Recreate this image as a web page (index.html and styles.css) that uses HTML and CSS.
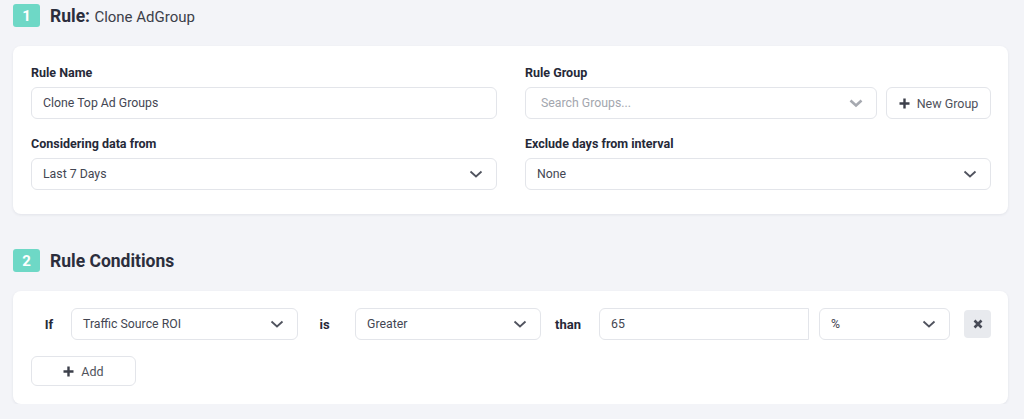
FILE: index.html
```html
<!DOCTYPE html>
<html>
<head>
  <title>Rule Editor</title>
  <link rel="stylesheet" href="styles.css">
</head>
<body>
  <div class="section-title">
    <span class="step">1</span>
    <h2><b>Rule:</b> <span class="rule-name">Clone AdGroup</span></h2>
  </div>
  <div class="card card-rule">
    <div class="grid">
      <div class="field">
        <label>Rule Name</label>
        <div class="input">Clone Top Ad Groups</div>
      </div>
      <div class="field">
        <label>Rule Group</label>
        <div class="group-row">
          <div class="input select search">
            <span class="placeholder">Search Groups...</span>
            <svg class="chev bold" width="14" height="10" viewBox="0 0 14 10"><path d="M1.5 2.5 L7 7.5 L12.5 2.5" fill="none" stroke="currentColor" stroke-width="2.6"/></svg>
          </div>
          <div class="btn new-group">
            <svg width="11" height="11" viewBox="0 0 11 11"><path d="M5.5 0.5 V10.5 M0.5 5.5 H10.5" stroke="currentColor" stroke-width="2.4"/></svg>
            New Group
          </div>
        </div>
      </div>
      <div class="field">
        <label>Considering data from</label>
        <div class="input select">
          <span>Last 7 Days</span>
          <svg class="chev" width="14" height="10" viewBox="0 0 14 10"><path d="M1.5 2.5 L7 7.5 L12.5 2.5" fill="none" stroke="currentColor" stroke-width="1.8"/></svg>
        </div>
      </div>
      <div class="field">
        <label>Exclude days from interval</label>
        <div class="input select">
          <span>None</span>
          <svg class="chev" width="14" height="10" viewBox="0 0 14 10"><path d="M1.5 2.5 L7 7.5 L12.5 2.5" fill="none" stroke="currentColor" stroke-width="1.8"/></svg>
        </div>
      </div>
    </div>
  </div>

  <div class="section-title second">
    <span class="step">2</span>
    <h2><b>Rule Conditions</b></h2>
  </div>
  <div class="card card-cond">
    <div class="cond-row">
      <span class="word w-if">If</span>
      <div class="input select s-metric">
        <span>Traffic Source ROI</span>
        <svg class="chev" width="14" height="10" viewBox="0 0 14 10"><path d="M1.5 2.5 L7 7.5 L12.5 2.5" fill="none" stroke="currentColor" stroke-width="1.8"/></svg>
      </div>
      <span class="word w-is">is</span>
      <div class="input select s-op">
        <span>Greater</span>
        <svg class="chev" width="14" height="10" viewBox="0 0 14 10"><path d="M1.5 2.5 L7 7.5 L12.5 2.5" fill="none" stroke="currentColor" stroke-width="1.8"/></svg>
      </div>
      <span class="word w-than">than</span>
      <div class="input s-value">65</div>
      <div class="input select s-unit">
        <span>%</span>
        <svg class="chev" width="14" height="10" viewBox="0 0 14 10"><path d="M1.5 2.5 L7 7.5 L12.5 2.5" fill="none" stroke="currentColor" stroke-width="1.8"/></svg>
      </div>
      <div class="remove">
        <svg width="10" height="10" viewBox="0 0 10 10"><path d="M1.5 1.5 L8.5 8.5 M8.5 1.5 L1.5 8.5" stroke="currentColor" stroke-width="2.6"/></svg>
      </div>
    </div>
    <div class="btn add">
      <svg width="11" height="11" viewBox="0 0 11 11"><path d="M5.5 0.5 V10.5 M0.5 5.5 H10.5" stroke="currentColor" stroke-width="2.4"/></svg>
      Add
    </div>
  </div>
</body>
</html>
```

FILE: styles.css
```css
body {
  margin: 0;
  padding: 4px 16px 0 13px;
  background-color: #f3f4f8;
  font-family: Roboto, "Liberation Sans", sans-serif;
  color: #2b2e3d;
}

.section-title {
  display: flex;
  align-items: center;
  height: 23px;
}

.section-title.second {
  margin-top: 35px;
}

.step {
  width: 27px;
  height: 23px;
  border-radius: 3px;
  background-color: #6ed8c6;
  color: #ffffff;
  font-size: 15px;
  font-weight: 700;
  display: flex;
  justify-content: center;
  align-items: center;
}

h2 {
  margin: 0 0 0 10px;
  font-size: 17.5px;
  font-weight: 400;
  color: #2b2e3d;
}

h2 b {
  font-weight: 700;
}

.rule-name {
  font-size: 15px;
  color: #3c3f4a;
}

.card {
  background-color: #ffffff;
  border-radius: 8px;
  box-shadow: 0 1px 3px rgba(30, 35, 60, 0.08);
}

.card-rule {
  margin-top: 19px;
  padding: 19px 17px 24px 18px;
}

.grid {
  display: grid;
  grid-template-columns: 466px 466px;
  column-gap: 28px;
  row-gap: 17px;
}

.field label {
  display: block;
  font-size: 12.5px;
  font-weight: 700;
  color: #262938;
  height: 16px;
  line-height: 16px;
  margin-bottom: 6px;
}

.input {
  box-sizing: border-box;
  height: 32px;
  border: 1px solid #e3e5ea;
  border-radius: 6px;
  padding: 0 11px;
  display: flex;
  align-items: center;
  font-size: 12.3px;
  color: #434652;
  background-color: #ffffff;
}

.select {
  justify-content: space-between;
}

.chev {
  color: #50535e;
  margin-right: 2px;
}

.chev.bold {
  color: #a6a9b0;
}

.placeholder {
  color: #a3a6ae;
  padding-left: 4px;
}

.group-row {
  display: flex;
  gap: 9px;
}

.search {
  width: 352px;
}

.btn {
  box-sizing: border-box;
  height: 32px;
  border: 1px solid #e3e5ea;
  border-radius: 6px;
  display: flex;
  align-items: center;
  justify-content: center;
  gap: 7px;
  font-size: 12.5px;
  color: #4f525c;
  background-color: #ffffff;
}

.btn svg {
  color: #3d404b;
}

.new-group {
  width: 105px;
}

.card-cond {
  margin-top: 19px;
  padding: 17px 17px 18px 18px;
}

.cond-row {
  display: flex;
  align-items: center;
}

.word {
  font-size: 13px;
  font-weight: 700;
  color: #262938;
  text-align: center;
  padding-right: 4px;
  box-sizing: border-box;
}

.w-if {
  width: 40px;
}

.w-is {
  width: 57px;
}

.w-than {
  width: 58px;
}

.s-metric {
  width: 227px;
}

.s-op {
  width: 186px;
}

.s-value {
  width: 210px;
  border-radius: 6px 0 0 6px;
}

.s-unit {
  width: 131px;
  margin-left: 10px;
}

.remove {
  width: 27px;
  height: 28px;
  margin-left: 14px;
  border-radius: 4px;
  background-color: #e8eaee;
  color: #474a56;
  display: flex;
  justify-content: center;
  align-items: center;
}

.add {
  width: 105px;
  height: 30px;
  margin-top: 16px;
}
```
